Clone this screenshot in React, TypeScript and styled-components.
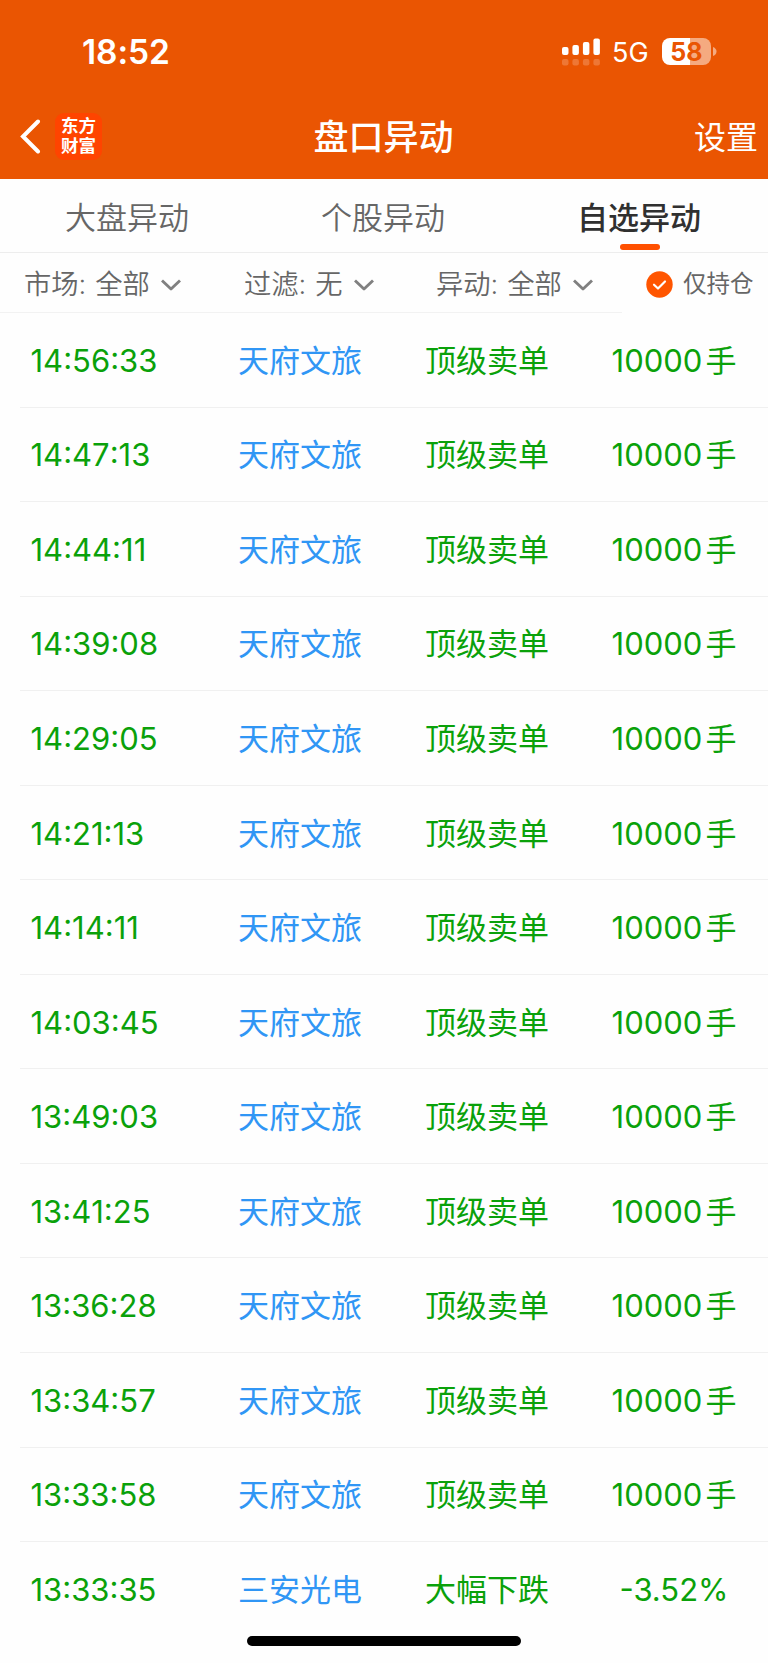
import React from 'react';
import styled, { createGlobalStyle } from 'styled-components';

const GlobalStyle = createGlobalStyle`
  * { box-sizing: border-box; }
  body {
    margin: 0;
    background: #fefefe;
    font-family: Inter, 'Noto Sans CJK SC', sans-serif;
  }
`;

const Screen = styled.main`
  position: relative;
  width: 768px;
  height: 1663px;
  overflow: hidden;
  display: flex;
  flex-direction: column;
  background: #fefefe;
`;

const Header = styled.header`
  height: 179.4px;
  flex: none;
  background: #ea5502;
  color: #fff;
`;

const StatusBar = styled.div`
  height: 103px;
  padding: 0 51.5px 0 82px;
  display: flex;
  align-items: center;
  justify-content: space-between;
`;

const Clock = styled.span`
  font-size: 33.5px;
  font-weight: 600;
  line-height: 40px;
  letter-spacing: -0.1px;
`;

const StatusIcons = styled.div`
  display: flex;
  align-items: center;
`;

const Network = styled.span`
  margin: 2px 0 0 11px;
  width: 50px;
  font-size: 27px;
  line-height: 32px;
`;

const Battery = styled.div`
  display: flex;
  align-items: center;
  gap: 1.5px;
`;

const BatteryBody = styled.div`
  width: 49px;
  height: 27px;
  border-radius: 8px;
  background: linear-gradient(90deg, #fff 58%, #f5aa80 58%);
  color: #ea5502;
  font-size: 25px;
  font-weight: 700;
  line-height: 28px;
  text-align: center;
`;

const NavBar = styled.div`
  height: 66px;
  padding: 0 10px 0 20px;
  display: grid;
  grid-template-columns: 1fr auto 1fr;
  align-items: center;
`;

const NavStart = styled.div`
  display: flex;
  align-items: center;
  gap: 14px;
`;

const Logo = styled.div`
  width: 47px;
  height: 47px;
  padding-top: 3.5px;
  border-radius: 9px;
  background: #ff4400;
  font-size: 17.5px;
  font-weight: 700;
  line-height: 19.5px;
  text-align: center;
`;

const Title = styled.h1`
  margin: 2px 11px 0 0;
  font-size: 35px;
  font-weight: 500;
  line-height: 48px;
`;

const Settings = styled.span`
  justify-self: end;
  margin-top: 3px;
  font-size: 32px;
  line-height: 46px;
  font-weight: 400;
`;

const Tabs = styled.nav`
  height: 73.6px;
  flex: none;
  display: grid;
  grid-template-columns: repeat(3, 1fr);
  border-bottom: 1px solid #ededed;
`;

const Tab = styled.div<{ $active?: boolean }>`
  display: flex;
  flex-direction: column;
  align-items: center;
  padding-top: 16px;
  font-size: 31px;
  line-height: 46px;
  font-weight: ${(p) => (p.$active ? 500 : 350)};
  color: ${(p) => (p.$active ? '#303030' : '#666')};
  &::after {
    content: '';
    width: 40px;
    height: 6px;
    margin-top: 3px;
    border-radius: 3px;
    background: ${(p) => (p.$active ? '#ff5000' : 'transparent')};
  }
`;

const TabLabel = styled.span`
  margin-right: 2px;
`;

const Filters = styled.div`
  height: 60px;
  flex: none;
  display: flex;
  align-items: stretch;
  color: #666;
`;

const FilterGroup = styled.div`
  width: 622px;
  display: grid;
  grid-template-columns: 220px 192px 210px;
  padding-left: 24px;
  background: linear-gradient(#f2f2f2, #f2f2f2) 0 100% / 622px 1px no-repeat;
`;

const Filter = styled.div`
  display: flex;
  align-items: center;
  font-size: 27.3px;
  line-height: 40px;
  font-weight: 350;
  white-space: nowrap;
  padding-top: 5px;
  svg { margin: 0 0 0 11px; }
`;

const FilterLabel = styled.span`
  margin-right: 9px;
`;

const Holding = styled.label`
  display: flex;
  align-items: center;
  gap: 10px;
  padding: 3px 0 0 24px;
  font-size: 23.5px;
  line-height: 36px;
  white-space: nowrap;
`;

const List = styled.section`
  display: flex;
  flex-direction: column;
`;

const Row = styled.div`
  height: 94.55px;
  flex: none;
  display: grid;
  grid-template-columns: 187px 187px 187px 187px;
  align-items: center;
  margin-left: 20px;
  padding-top: 2.2px;
  border-bottom: 1px solid #f0f0f0;
  color: #0aa10a;
  font-size: 31px;
  line-height: 44px;
  &:last-child { border-bottom-color: transparent; }
`;

const Time = styled.span`
  padding-left: 10.5px;
  font-kerning: none;
`;

const Cell = styled.span<{ $color?: string }>`
  color: ${(p) => p.$color ?? 'inherit'};
  padding-right: 1px;
  text-align: center;
`;

const Unit = styled.span`
  margin-left: 3px;
`;

const HomeIndicator = styled.div`
  position: absolute;
  left: 247px;
  top: 1636px;
  width: 274px;
  height: 10px;
  border-radius: 5px;
  background: #000;
`;

const Signal = () => (
  <svg width="39" height="28" viewBox="0 0 39 28" fill="#fff">
    <rect x="0" y="9" width="6.5" height="8" rx="2" />
    <rect x="10.4" y="7" width="6.5" height="10" rx="2" />
    <rect x="20.9" y="4" width="6.5" height="13" rx="2" />
    <rect x="31.4" y="0.5" width="6.5" height="16.5" rx="2" />
    <g opacity="0.2">
      <rect x="0" y="21" width="6.5" height="6.5" rx="2" />
      <rect x="10.4" y="21" width="6.5" height="6.5" rx="2" />
      <rect x="20.9" y="21" width="6.5" height="6.5" rx="2" />
      <rect x="31.4" y="21" width="6.5" height="6.5" rx="2" />
    </g>
  </svg>
);

const Chevron = () => (
  <svg width="20" height="13" viewBox="0 0 20 13" fill="none" stroke="#808080" strokeWidth="2.9">
    <path d="M1 1.5 L10 10 L19 1.5" strokeLinejoin="round" />
  </svg>
);

const events: { time: string; name: string; type: string; value: string; unit?: string }[] = [
  ...[
    '14:56:33', '14:47:13', '14:44:11', '14:39:08', '14:29:05', '14:21:13', '14:14:11',
    '14:03:45', '13:49:03', '13:41:25', '13:36:28', '13:34:57', '13:33:58',
  ].map((time) => ({ time, name: '天府文旅', type: '顶级卖单', value: '10000', unit: '手' })),
  { time: '13:33:35', name: '三安光电', type: '大幅下跌', value: '-3.52%' },
];

const filters = [
  { label: '市场:', value: '全部' },
  { label: '过滤:', value: '无' },
  { label: '异动:', value: '全部' },
];

export default function App() {
  return (
    <Screen>
      <GlobalStyle />
      <Header>
        <StatusBar>
          <Clock>18:52</Clock>
          <StatusIcons>
            <Signal />
            <Network>5G</Network>
            <Battery>
              <BatteryBody>58</BatteryBody>
              <svg width="4" height="9" viewBox="0 0 4 9" fill="#f5aa80">
                <path d="M0 0 Q3.5 1.5 3.5 4.5 Q3.5 7.5 0 9 Z" />
              </svg>
            </Battery>
          </StatusIcons>
        </StatusBar>
        <NavBar>
          <NavStart>
            <svg width="21" height="35" viewBox="0 0 21 35" fill="none" stroke="#fff" strokeWidth="4" strokeLinecap="round">
              <path d="M18 2.5 L3 17.5 L18 32.5" />
            </svg>
            <Logo>东方<br />财富</Logo>
          </NavStart>
          <Title>盘口异动</Title>
          <Settings>设置</Settings>
        </NavBar>
      </Header>
      <Tabs>
        <Tab><TabLabel>大盘异动</TabLabel></Tab>
        <Tab><TabLabel>个股异动</TabLabel></Tab>
        <Tab $active><TabLabel>自选异动</TabLabel></Tab>
      </Tabs>
      <Filters>
        <FilterGroup>
          {filters.map((f) => (
            <Filter key={f.label}>
              <FilterLabel>{f.label}</FilterLabel>
              {f.value}
              <Chevron />
            </Filter>
          ))}
        </FilterGroup>
        <Holding>
          <svg width="27" height="27" viewBox="0 0 27 27" fill="none">
            <circle cx="13.5" cy="13.5" r="13.2" fill="#ff5500" />
            <path d="M8 13.7 L12 17.5 L19 10.5" stroke="#fff" strokeWidth="2.2" strokeLinecap="round" strokeLinejoin="round" />
          </svg>
          仅持仓
        </Holding>
      </Filters>
      <List>
        {events.map((e) => (
          <Row key={e.time}>
            <Time>{e.time}</Time>
            <Cell $color="#3096f5">{e.name}</Cell>
            <Cell>{e.type}</Cell>
            <Cell>
              {e.value}
              {e.unit && <Unit>{e.unit}</Unit>}
            </Cell>
          </Row>
        ))}
      </List>
      <HomeIndicator />
    </Screen>
  );
}
